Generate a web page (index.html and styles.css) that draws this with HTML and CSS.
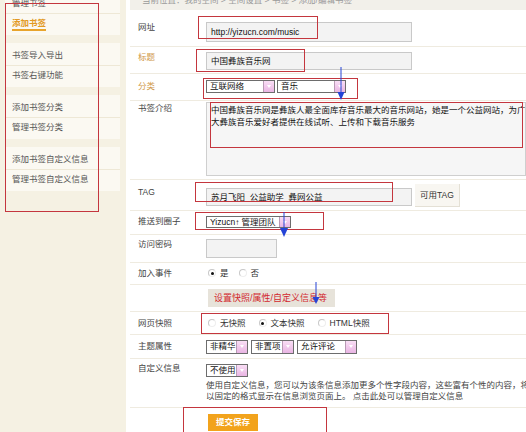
FILE: index.html
```html
<!DOCTYPE html>
<html lang="zh-CN">
<head>
<meta charset="utf-8">
<title>添加/编辑书签</title>
<link rel="stylesheet" href="styles.css">
</head>
<body>
<div class="page">
  <aside class="side">
    <div class="grp">
      <a class="item">管理书签</a>
      <a class="item active"><span>添加书签</span></a>
    </div>
    <div class="grp">
      <a class="item">书签导入导出</a>
      <a class="item">书签右键功能</a>
    </div>
    <div class="grp">
      <a class="item">添加书签分类</a>
      <a class="item">管理书签分类</a>
    </div>
    <div class="grp">
      <a class="item">添加书签自定义信息</a>
      <a class="item">管理书签自定义信息</a>
    </div>
  </aside>
  <main class="main">
    <div class="crumb">当前位置：我的空间 &gt; 空间设置 &gt; 书签 &gt; 添加/编辑书签</div>
    <div class="row r-url">
      <div class="lbl">网址</div>
      <div class="fld"><span class="inp inp-url">http://yizucn.com/music</span></div>
    </div>
    <div class="row r-title">
      <div class="lbl req">标题</div>
      <div class="fld"><span class="inp inp-title">中国彝族音乐网</span></div>
    </div>
    <div class="row r-cat">
      <div class="lbl req">分类</div>
      <div class="fld gap2">
        <span class="sel w69"><span class="t">互联网络</span><span class="ar"></span></span>
        <span class="sel w69"><span class="t">音乐</span><span class="ar"></span></span>
      </div>
    </div>
    <div class="row r-intro">
      <div class="lbl">书签介绍</div>
      <div class="fld">
        <div class="ta">
          <span class="ln">中国彝族音乐网是彝族人最全面库存音乐最大的音乐网站，她是一个公益网站，为广</span>
          <span class="ln">大彝族音乐爱好者提供在线试听、上传和下载音乐服务</span>
        </div>
      </div>
    </div>
    <div class="row r-tag">
      <div class="lbl">TAG</div>
      <div class="fld">
        <span class="inp inp-tag">苏月飞阳&nbsp; 公益助学&nbsp; 彝网公益</span>
        <span class="btn-tag">可用TAG</span>
      </div>
    </div>
    <div class="row r-push">
      <div class="lbl">推送到圈子</div>
      <div class="fld"><span class="sel w85"><span class="t">Yizucn<b class="cur">↑</b> 管理团队</span><span class="ar"></span></span></div>
    </div>
    <div class="row r-pwd">
      <div class="lbl">访问密码</div>
      <div class="fld"><span class="inp inp-pwd"></span></div>
    </div>
    <div class="row r-event">
      <div class="lbl">加入事件</div>
      <div class="fld radios">
        <span class="radio on"><i></i>是</span>
        <span class="radio"><i></i>否</span>
      </div>
    </div>
    <div class="row r-more">
      <div class="lbl"></div>
      <div class="fld"><span class="btn-more">设置快照/属性/自定义信息等</span></div>
    </div>
    <div class="row r-snap">
      <div class="lbl">网页快照</div>
      <div class="fld radios wide">
        <span class="radio"><i></i>无快照</span>
        <span class="radio on"><i></i>文本快照</span>
        <span class="radio"><i></i>HTML快照</span>
      </div>
    </div>
    <div class="row r-attr">
      <div class="lbl">主题属性</div>
      <div class="fld gap3">
        <span class="sel w42"><span class="t">非精华</span><span class="ar"></span></span>
        <span class="sel w43"><span class="t">非置项</span><span class="ar"></span></span>
        <span class="sel w60"><span class="t">允许评论</span><span class="ar"></span></span>
      </div>
    </div>
    <div class="row r-custom">
      <div class="lbl">自定义信息</div>
      <div class="fld col">
        <span class="sel w42"><span class="t">不使用</span><span class="ar"></span></span>
        <p class="desc">
          <span class="ln">使用自定义信息，您可以为该条信息添加更多个性字段内容，这些富有个性的内容，将</span>
          <span class="ln">以固定的格式显示在信息浏览页面上。 点击此处可以管理自定义信息</span>
        </p>
      </div>
    </div>
    <div class="row r-submit">
      <div class="lbl"></div>
      <div class="fld"><span class="btn-submit">提交保存</span></div>
    </div>
  </main>
</div>

<div class="notes">
  <span class="box b-side"></span>
  <span class="box b-url"></span>
  <span class="box b-title"></span>
  <span class="box b-cat"></span>
  <span class="box b-intro"></span>
  <span class="box b-tag"></span>
  <span class="box b-push"></span>
  <span class="box b-snap"></span>
  <span class="box b-submit"></span>
  <svg class="arrow a1" width="10" height="34" viewBox="0 0 10 34"><line x1="5" y1="0" x2="5" y2="27" stroke="#2443d6" stroke-width="1"/><polygon points="1.5,25 8.5,25 5,33" fill="#2443d6"/></svg>
  <svg class="arrow a2" width="10" height="26" viewBox="0 0 10 26"><line x1="5" y1="0" x2="5" y2="18" stroke="#2443d6" stroke-width="1"/><polygon points="1,16 9,16 5,25" fill="#2443d6"/></svg>
  <svg class="arrow a3" width="10" height="24" viewBox="0 0 10 24"><line x1="5" y1="0" x2="5" y2="17" stroke="#2443d6" stroke-width="1"/><polygon points="1.5,15 8.5,15 5,22" fill="#2443d6"/></svg>
</div>
</body>
</html>
```

FILE: styles.css
```css
* { box-sizing: border-box; margin: 0; padding: 0; }

html, body {
  width: 526px;
  height: 432px;
  overflow: hidden;
  background: #fff;
}

body {
  font-family: "Liberation Sans", "Noto Sans CJK SC", sans-serif;
  font-size: 8.5px;
  line-height: 12px;
  color: #444;
}

.page {
  display: flex;
  margin-top: -9px;
  height: 460px;
}

/* ---------- sidebar ---------- */
.side {
  width: 126px;
  flex: none;
  background: #f5f1e3;
  display: flex;
  flex-direction: column;
  gap: 8px;
}

.grp {
  background: #fbf9f2;
  margin-left: 5px;
  width: 115px;
  padding: 3px 0;
}

.item {
  display: block;
  height: 19px;
  line-height: 19px;
  padding-left: 7px;
  color: #555;
}

.item + .item { border-top: 1px solid #eee8d6; }

.item.active { color: #e29a24; font-weight: bold; }

.item.active span {
  display: inline-block;
  line-height: 12px;
  border-bottom: 2px solid #e8a42c;
}

/* ---------- main ---------- */
.main {
  flex: 1;
  min-width: 0;
  background: #fff;
  padding-left: 4px;
}

.crumb {
  height: 19px;
  line-height: 19px;
  background: #f2f0ea;
  padding-left: 12px;
  color: #9a9a9a;
  white-space: nowrap;
}

.row {
  display: flex;
  border-bottom: 1px solid #efebe0;
}

.lbl {
  width: 76px;
  flex: none;
  padding-left: 8px;
  color: #444;
  white-space: nowrap;
}

.lbl.req { color: #d19a4c; }

.fld {
  flex: 1;
  min-width: 0;
  display: flex;
  align-items: flex-start;
  white-space: nowrap;
}

.fld.col { flex-direction: column; }
.gap2 { gap: 2px; }
.gap3 { gap: 3px; }

/* row geometry */
.r-url { height: 37px; }
.r-url .lbl { padding-top: 11px; }
.r-url .fld { padding-top: 12px; }

.r-title { height: 27px; }
.r-title .lbl { padding-top: 4px; }
.r-title .fld { padding-top: 5px; }

.r-cat { height: 27px; }
.r-cat .lbl { padding-top: 6px; }
.r-cat .fld { padding-top: 6px; }

.r-intro { height: 79px; }
.r-intro .lbl { padding-top: 1px; }
.r-intro .fld { padding-top: 1px; }

.r-tag { height: 31px; }
.r-tag .lbl { padding-top: 6px; }
.r-tag .fld { padding-top: 4px; }

.r-push { height: 24px; }
.r-push .lbl { padding-top: 4px; }
.r-push .fld { padding-top: 5px; }

.r-pwd { height: 28px; }
.r-pwd .lbl { padding-top: 3px; }
.r-pwd .fld { padding-top: 4px; }

.r-event { height: 22px; }
.r-event .lbl { padding-top: 4px; }
.r-event .fld { padding-top: 4px; }

.r-more { height: 27px; }
.r-more .fld { padding-top: 4px; padding-left: 2px; }

.r-snap { height: 23px; }
.r-snap .lbl { padding-top: 5px; }
.r-snap .fld { padding-top: 5px; }

.r-attr { height: 24px; }
.r-attr .lbl { padding-top: 5px; }
.r-attr .fld { padding-top: 5px; }

.r-custom { height: 49px; }
.r-custom .lbl { padding-top: 3px; }
.r-custom .fld { padding-top: 5px; }

.r-submit { height: 30px; border-bottom: 0; }
.r-submit .fld { padding-top: 6px; padding-left: 2px; }

/* inputs */
.inp {
  display: block;
  border: 1px solid #c9c9c9;
  background: #f3f3f3;
  padding-left: 4px;
  color: #111;
}

.inp-url { width: 206px; height: 20px; line-height: 18px; }
.inp-title { width: 206px; height: 18px; line-height: 16px; }
.inp-tag { width: 206px; height: 18px; line-height: 16px; margin-top: 4px; }
.inp-pwd { width: 71px; height: 19px; }

.btn-tag {
  display: block;
  height: 23px;
  line-height: 22px;
  margin-left: 3px;
  padding: 0 5px;
  background: #f8f6f1;
  border-right: 1px solid #e4e0d5;
  border-bottom: 1px solid #e4e0d5;
  color: #333;
}

.ta {
  width: 340px;
  height: 74px;
  border: 1px solid #cfcfcf;
  background: #f6f6f6;
  padding: 1px 4px;
  color: #111;
  overflow: hidden;
}

.ln { display: block; white-space: nowrap; }

/* selects */
.sel {
  display: inline-flex;
  height: 13px;
  border: 1px solid #6d6d6d;
  background: #fff;
  color: #111;
  flex: none;
}

.r-attr .sel { height: 14px; }
.r-push .sel { height: 12px; }

.sel .t {
  flex: 1;
  padding-left: 3px;
  line-height: 11px;
  overflow: hidden;
}

.sel .ar {
  width: 11px;
  flex: none;
  background: linear-gradient(#f9def5, #e9b5e3);
  border-left: 1px solid #b89ab4;
  position: relative;
}

.sel .ar::after {
  content: "";
  position: absolute;
  left: 3px;
  top: 4px;
  border-left: 2px solid transparent;
  border-right: 2px solid transparent;
  border-top: 3px solid #fff;
}

.w42 { width: 42px; }
.w43 { width: 43px; }
.w60 { width: 60px; }
.w69 { width: 69px; }
.w85 { width: 85px; }

.cur { font-weight: bold; color: #111; font-size: 8px; }

/* radios */
.radios { gap: 10px; padding-left: 2px; }
.radios.wide { gap: 13px; }

.radio {
  display: inline-flex;
  align-items: center;
  gap: 4px;
  height: 12px;
  color: #333;
}

.radio i {
  width: 8px;
  height: 8px;
  border-radius: 50%;
  border: 1px solid #c8c8c8;
  border-right-color: #eee;
  border-bottom-color: #eee;
  background: #fff;
  position: relative;
}

.radio.on i::after {
  content: "";
  position: absolute;
  left: 1.5px;
  top: 1.5px;
  width: 3px;
  height: 3px;
  border-radius: 50%;
  background: #111;
}

/* buttons */
.btn-more {
  display: block;
  width: 127px;
  height: 18px;
  line-height: 18px;
  padding-left: 6px;
  background: #e7e3da;
  color: #d2282e;
  font-size: 9px;
}

.btn-submit {
  display: block;
  height: 17px;
  line-height: 17px;
  padding: 0 8px;
  background: #f2a31c;
  color: #fff;
  font-weight: bold;
}

.desc {
  margin-top: 3px;
  line-height: 11px;
  color: #444;
}

/* ---------- annotations ---------- */
.notes {
  position: absolute;
  left: 0;
  top: 0;
  width: 526px;
  height: 432px;
  pointer-events: none;
}

.box {
  position: absolute;
  border: 1px solid #c4363e;
}

.b-side { left: 5px; top: 3px; width: 94px; height: 209px; }
.b-url { left: 198px; top: 16px; width: 120px; height: 23px; }
.b-title { left: 196px; top: 49px; width: 109px; height: 23px; }
.b-cat { left: 203px; top: 78px; width: 155px; height: 21px; }
.b-intro { left: 210px; top: 102px; width: 313px; height: 46px; }
.b-tag { left: 195px; top: 182px; width: 198px; height: 20px; }
.b-push { left: 195px; top: 212px; width: 129px; height: 18px; }
.b-snap { left: 201px; top: 313px; width: 188px; height: 21px; }
.b-submit { left: 183px; top: 407px; width: 144px; height: 40px; }

.arrow { position: absolute; }
.a1 { left: 336px; top: 67px; }
.a2 { left: 279px; top: 212px; }
.a3 { left: 311px; top: 282px; }
```
